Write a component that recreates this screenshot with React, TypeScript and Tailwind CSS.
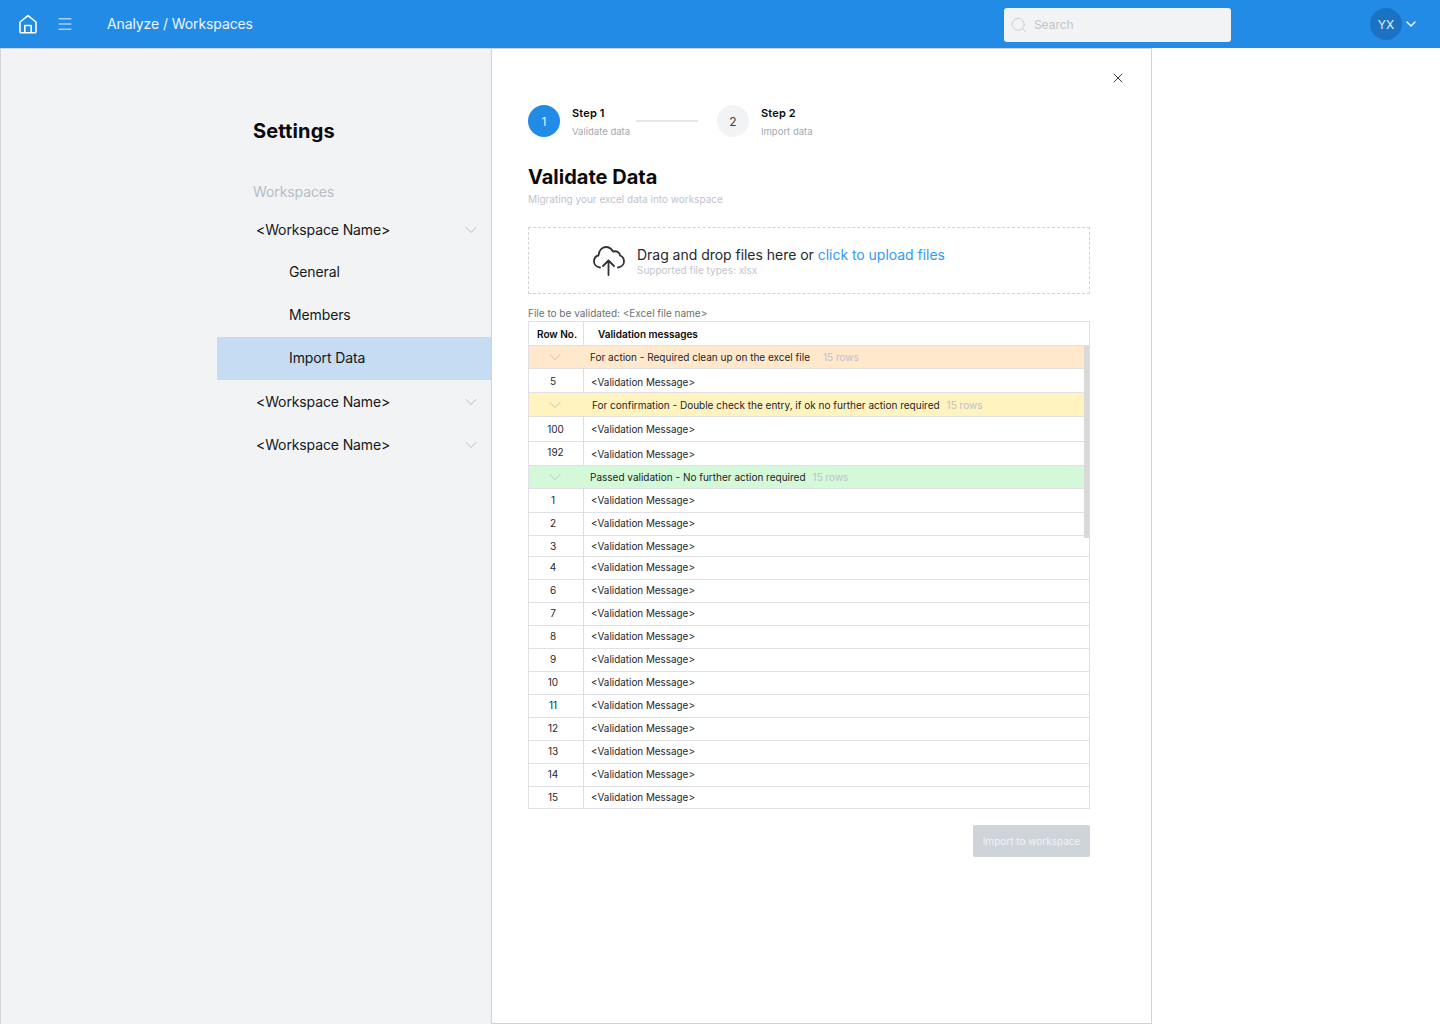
import { ChevronDown, Menu, Search, X } from "lucide-react";

const font = { fontFamily: "Inter, sans-serif" };

function GroupChevron() {
  return (
    <div className="flex w-[54px] shrink-0 justify-center pr-[3px]">
      <ChevronDown className="size-5 text-[#b4b9c2]" strokeWidth={1} />
    </div>
  );
}

function Count({ ml }: { ml: string }) {
  return <span className={`text-[10px] leading-none text-[#bcc1c9] ${ml}`}>15 rows</span>;
}

function Row({ n, h, last, numCls = "pb-[2px]", msgCls = "" }: { n: string; h: string; last?: boolean; numCls?: string; msgCls?: string }) {
  return (
    <div className={`flex ${h} ${last ? "" : "border-b border-[#e0e0e6]"}`}>
      <div className={`flex w-[54px] shrink-0 items-center justify-center text-[10px] leading-none text-[#25282c] ${n.length === 3 ? "pr-[1px]" : "pr-[6px]"} ${numCls}`}>{n}</div>
      <div className={`flex flex-1 items-center border-l border-[#dcdfe4] pl-[7px] text-[9.9px] leading-none text-[#25282c] ${msgCls}`}>
        &lt;Validation Message&gt;
      </div>
    </div>
  );
}

function Nav({ label, active, child }: { label: string; active?: boolean; child?: boolean }) {
  return (
    <div className={`flex h-[43px] items-center justify-between pr-[10px] text-sm tracking-[-0.12px] text-[#16181b] ${child ? "pb-[2px] pl-[72px]" : "pl-[39px]"} ${active ? "bg-[#c5dcf2]" : ""}`}>
      <span>{label}</span>
      {!child && <ChevronDown className="size-5 text-[#b4b9c2]" strokeWidth={1.1} />}
    </div>
  );
}

export default function App() {
  return (
    <div style={font} className="flex h-[1024px] w-[1440px] flex-col overflow-hidden bg-white">
      <header className="flex h-12 shrink-0 items-center bg-[#228be6] pl-[17px] pr-[21px] text-white">
        <svg width="22" height="22" viewBox="0 0 22 22" fill="none" stroke="white" strokeWidth="1.6" strokeLinejoin="round">
          <path d="M11 2.600 3 9v9.400c0 .9.6 1.400 1.400 1.400h13.200c.8 0 1.400-.5 1.400-1.400V9L11 2.600Z" />
          <path d="M7.800 19.800v-7.300h6.400v7.300" />
        </svg>
        <Menu className="ml-[17px] size-[18px] text-[#a5d0f5]" strokeWidth={1.75} />
        <span className="ml-[33px] text-sm tracking-[-0.1px] text-[#eef6fd]">Analyze / Workspaces</span>
        <div className="ml-[751px] mt-[2px] flex h-[34px] w-[227px] items-center rounded-[3px] bg-[#f1f3f5] pl-[6px] text-xs text-[#c2c6cc]">
          <Search className="size-[18px]" strokeWidth={1.1} />
          <span className="ml-[6px]">Search</span>
        </div>
        <div className="ml-auto flex items-center">
          <div className="flex size-8 items-center justify-center rounded-full bg-[#1c72c2] pt-[2px] text-xs text-[#e6f1fb]">YX</div>
          <ChevronDown className="ml-[1px] size-[16px]" strokeWidth={2} />
        </div>
      </header>

      <div className="flex h-[976px] w-[1152px]">
        <aside className="h-full w-[492px] shrink-0 border-l border-r border-t border-[#cfd3da] bg-[#f1f3f5] pl-[216px]">
          <h1 className="ml-9 mt-[68px] text-xl leading-7 font-bold tracking-[0.15px] text-[#0a0a0a]">Settings</h1>
          <p className="ml-9 mt-[37px] text-sm leading-5 tracking-[-0.1px] text-[#b8bdc5]">Workspaces</p>
          <div className="mt-[6px]">
            <Nav label="<Workspace Name>" />
            <Nav label="General" child />
            <Nav label="Members" child />
            <Nav label="Import Data" child active />
            <Nav label="<Workspace Name>" />
            <Nav label="<Workspace Name>" />
          </div>
        </aside>

        <main className="relative h-full flex-1 border-b border-r border-t border-[#d2d2d6] pl-9 pr-[61px] pt-[56px]">
          <X className="absolute right-[25px] top-[21px] size-[16px] text-[#16181b]" strokeWidth={1.25} />

          <div className="flex h-8 items-center">
            <div className="flex size-8 items-center justify-center rounded-full bg-[#228be6] pt-[2px] text-xs text-[#e6f1fb]">1</div>
            <div className="ml-3 w-[64px]">
              <div className="text-[11px] leading-4 font-semibold tracking-[0.15px] text-[#0a0a0a]">Step 1</div>
              <div className="mt-[5px] text-[9.5px] leading-3 text-[#a3a9b3]">Validate data</div>
            </div>
            <div className="h-[2px] w-[62px] bg-[#e3e6ea]" />
            <div className="ml-[19px] flex size-8 items-center justify-center rounded-full bg-[#f1f3f5] pt-[2px] text-xs text-[#3a3e44]">2</div>
            <div className="ml-3">
              <div className="text-[11px] leading-4 font-semibold tracking-[0.15px] text-[#0a0a0a]">Step 2</div>
              <div className="mt-[5px] text-[9.5px] leading-3 text-[#a3a9b3]">Import data</div>
            </div>
          </div>

          <h2 className="mt-[26px] text-xl leading-7 font-bold text-[#0a0a0a]">Validate Data</h2>
          <p className="mt-[1px] text-[10px] leading-[14px] text-[#bfc4cb]">Migrating your excel data into workspace</p>

          <div className="mt-[21px] flex h-[67px] items-center border border-dashed border-[#cfd3da] pl-[64px]">
            <svg width="32" height="30" viewBox="0 0 32 30" fill="none" stroke="#2f3236" strokeWidth="1.8" strokeLinecap="round" strokeLinejoin="round" className="mt-[1px] shrink-0">
              <path d="M7 21.500C3.500 21 1 18.500 1 15.500 1 12.500 3 10 5.500 9.500 6 4.500 9 1 13 1c3 0 5.500 2 7 4.500 4.500-1 7 1.500 7 4 2.500 1 4 3.500 4 6 0 3-2.500 5.500-6 6" />
              <path d="M15.500 29V14.500M10 20l5.500-5.500L21 20" />
            </svg>
            <div className="ml-3 mt-[2px]">
              <div className="text-sm leading-4 tracking-[-0.03px] text-[#25282c]">
                Drag and drop files here or <span className="text-[#339af0]">click to upload files</span>
              </div>
              <div className="mb-[1px] mt-[1px] text-[10px] leading-3 text-[#c2c6cc]">Supported file types: xlsx</div>
            </div>
          </div>

          <p className="mt-3 text-[10px] leading-[14px] text-[#6b7077]">File to be validated: &lt;Excel file name&gt;</p>

          <div className="relative mt-[1px] border border-[#e0e0e6]">
            <div className="flex h-6 items-center border-b border-[#e0e0e6] text-[10px] leading-none font-semibold text-[#0a0a0a]">
              <div className="flex h-full w-[54px] shrink-0 items-center pl-2">Row No.</div>
              <div className="flex h-full flex-1 items-center border-l border-[#dcdfe4] pl-[14px]">Validation messages</div>
            </div>

            <div className="flex h-[23px] items-center border-b border-[#e0e0e6] bg-[#ffe8cc]">
              <GroupChevron />
              <span className="ml-[7px] text-[10px] leading-none text-[#1f2328]">For action - Required clean up on the excel file</span>
              <Count ml="ml-[13px]" />
            </div>
            <Row n="5" h="h-[24px]" numCls="pt-[1px]" msgCls="pt-[5px]" />
            <div className="flex h-[24px] items-center border-b border-[#e0e0e6] bg-[#fff3bf]">
              <GroupChevron />
              <span className="ml-[9px] text-[10px] leading-none text-[#1f2328]">For confirmation - Double check the entry, if ok no further action required</span>
              <Count ml="ml-[7px]" />
            </div>
            <Row n="100" h="h-[25px]" numCls="" msgCls="pt-[2px]" />
            <Row n="192" h="h-[24px]" numCls="pb-[4px]" msgCls="pt-[2px]" />
            <div className="flex h-[23px] items-center border-b border-[#e0e0e6] bg-[#d3f9d8]">
              <GroupChevron />
              <span className="ml-[7px] text-[10px] leading-none text-[#1f2328]">Passed validation - No further action required</span>
              <Count ml="ml-[7px]" />
            </div>
            <Row n="1" h="h-[24px]" />
            <Row n="2" h="h-[23px]" />
            <Row n="3" h="h-[21px]" numCls="" msgCls="pt-[2px]" />
            {["4", "6", "7", "8", "9", "10", "11", "12", "13", "14"].map((n) => (
              <Row key={n} n={n} h="h-[23px]" />
            ))}
            <Row n="15" h="h-[21px]" last />

            <div className="absolute left-[555px] top-[24px] h-[192px] w-[5px] bg-[#d9d9d9]" />
          </div>

          <div className="mt-4 flex justify-end">
            <button className="h-8 w-[117px] rounded-[2px] bg-[#ced4da] text-[10px] text-[#f1f3f5]">Import to workspace</button>
          </div>
        </main>
      </div>
    </div>
  );
}
